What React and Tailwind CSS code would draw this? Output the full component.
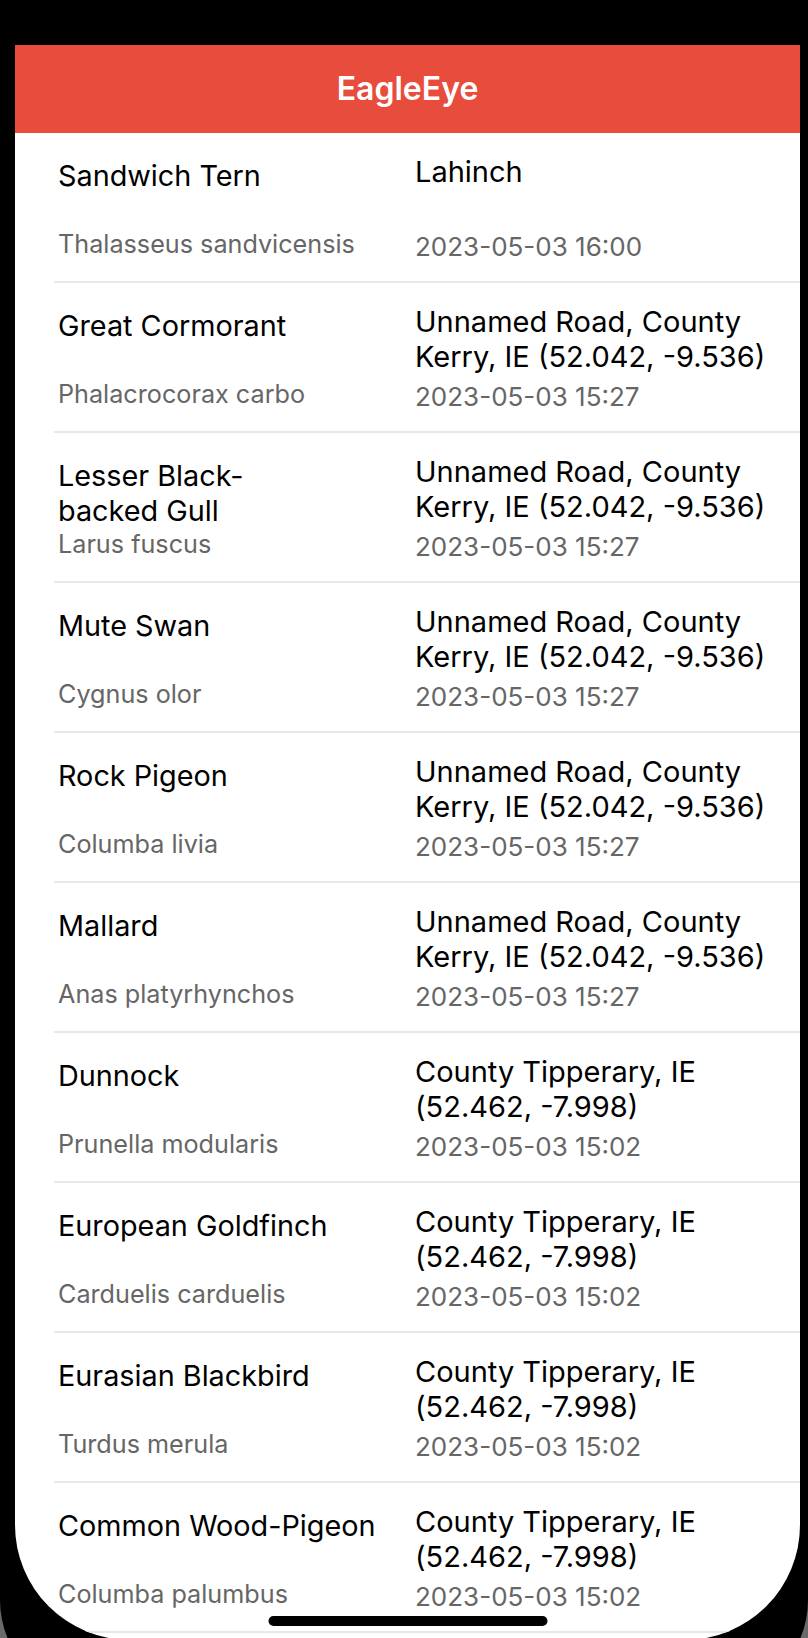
import React from 'react'

const sightings = [
  { name: 'Sandwich Tern', latin: 'Thalasseus sandvicensis', place: 'Lahinch', time: '2023-05-03 16:00' },
  { name: 'Great Cormorant', latin: 'Phalacrocorax carbo', place: 'Unnamed Road, County Kerry, IE (52.042, -9.536)', time: '2023-05-03 15:27' },
  { name: 'Lesser Black-backed Gull', latin: 'Larus fuscus', place: 'Unnamed Road, County Kerry, IE (52.042, -9.536)', time: '2023-05-03 15:27' },
  { name: 'Mute Swan', latin: 'Cygnus olor', place: 'Unnamed Road, County Kerry, IE (52.042, -9.536)', time: '2023-05-03 15:27' },
  { name: 'Rock Pigeon', latin: 'Columba livia', place: 'Unnamed Road, County Kerry, IE (52.042, -9.536)', time: '2023-05-03 15:27' },
  { name: 'Mallard', latin: 'Anas platyrhynchos', place: 'Unnamed Road, County Kerry, IE (52.042, -9.536)', time: '2023-05-03 15:27' },
  { name: 'Dunnock', latin: 'Prunella modularis', place: 'County Tipperary, IE (52.462, -7.998)', time: '2023-05-03 15:02' },
  { name: 'European Goldfinch', latin: 'Carduelis carduelis', place: 'County Tipperary, IE (52.462, -7.998)', time: '2023-05-03 15:02' },
  { name: 'Eurasian Blackbird', latin: 'Turdus merula', place: 'County Tipperary, IE (52.462, -7.998)', time: '2023-05-03 15:02' },
  { name: 'Common Wood-Pigeon', latin: 'Columba palumbus', place: 'County Tipperary, IE (52.462, -7.998)', time: '2023-05-03 15:02' },
]

function SightingRow({ item }) {
  return (
    <div className="flex h-[150px] shrink-0 border-b-2 border-[#e8e8e8] pl-[4px] pr-[20px]">
      {/* species */}
      <div className="flex w-[357px] shrink-0 flex-col justify-between pt-[25px] pb-[22px] pr-[24px]">
        <div className="text-[28.8px] leading-[35px] text-black text-pretty">{item.name}</div>
        <div className="text-[25.2px] leading-[30px] text-[#666666]">{item.latin}</div>
      </div>
      {/* location + time */}
      <div className="flex flex-1 flex-col justify-between pt-[21px] pb-[19px]">
        <div className="text-[29px] leading-[35px] text-black">{item.place}</div>
        <div className="text-[26px] leading-[30px] text-[#666666]">{item.time}</div>
      </div>
    </div>
  )
}

export default function App() {
  return (
    <div className="h-[1638px] w-[808px] overflow-hidden bg-[#6a6a6a] font-['Inter',sans-serif]">
      <div className="flex h-[1700px] w-[808px] flex-col rounded-b-[100px] bg-black pt-[45px] pl-[15px]">
        <div className="relative flex h-[1595px] w-[785px] flex-col overflow-hidden rounded-b-[115px] bg-white">
          {/* Header */}
          <div className="flex h-[88px] shrink-0 items-center justify-center bg-[#e74c3c]">
            <h1 className="text-[32px] font-semibold text-white">EagleEye</h1>
          </div>

          {/* Sightings list */}
          <div className="ml-[39px] flex flex-col">
            {sightings.map((item, i) => (
              <SightingRow key={i} item={item} />
            ))}
          </div>

          {/* Home indicator */}
          <div className="absolute bottom-[14px] left-1/2 h-[10px] w-[279px] -translate-x-1/2 rounded-full bg-black" />
        </div>
      </div>
    </div>
  )
}
